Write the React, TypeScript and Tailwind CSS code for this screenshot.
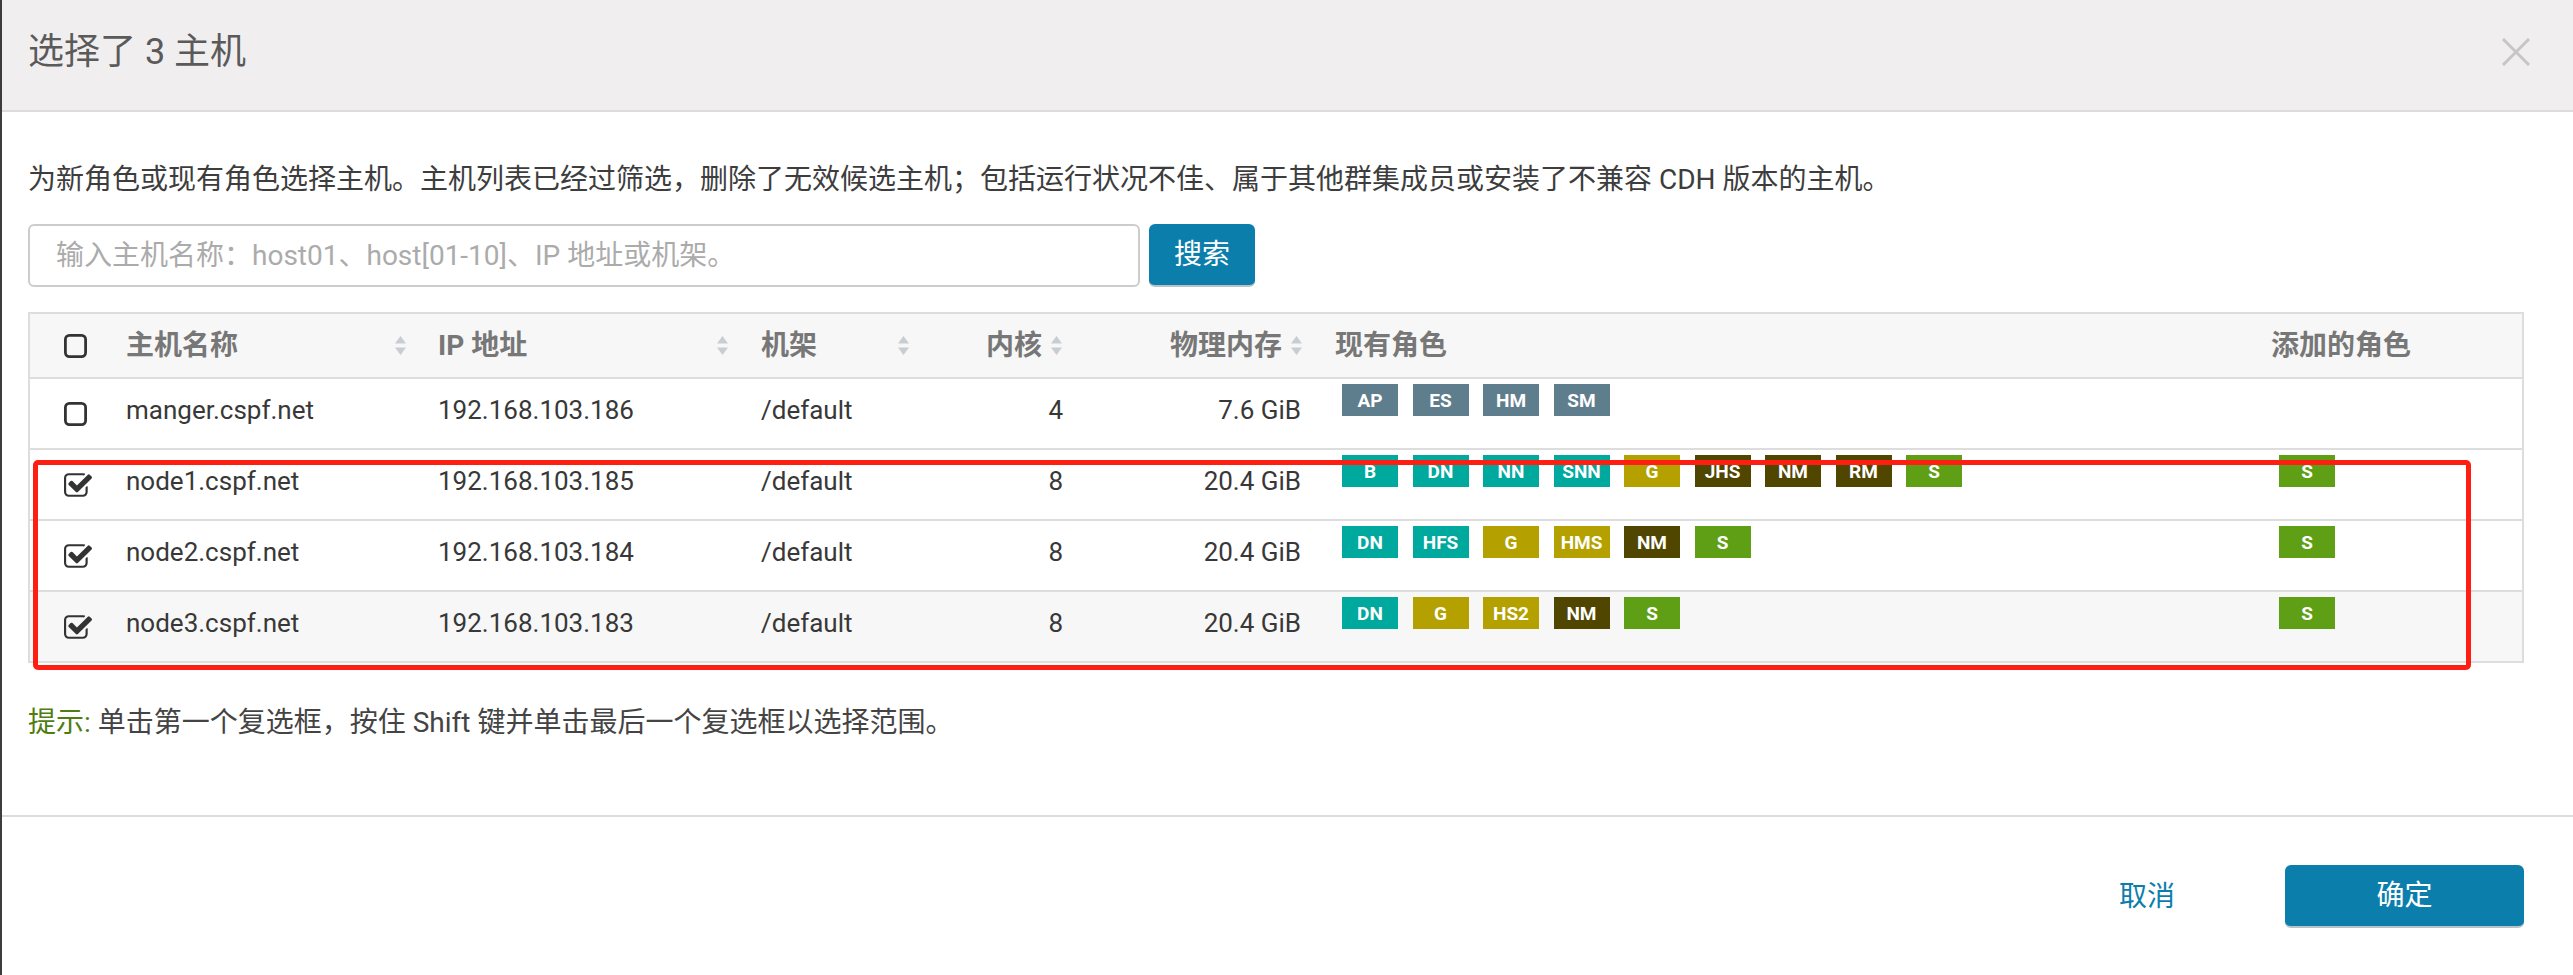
import React from "react";

type Role = { t: string; c: string };

const SLATE = "bg-[#5f7e8d]";
const TEAL = "bg-[#00a99d]";
const OLIVE = "bg-[#b4a100]";
const DARK = "bg-[#504600]";
const GREEN = "bg-[#5f9f15]";

const hosts: {
  name: string;
  ip: string;
  cores: string;
  mem: string;
  checked: boolean;
  roles: Role[];
  added: Role[];
  striped?: boolean;
}[] = [
  {
    name: "manger.cspf.net",
    ip: "192.168.103.186",
    cores: "4",
    mem: "7.6 GiB",
    checked: false,
    roles: [
      { t: "AP", c: SLATE },
      { t: "ES", c: SLATE },
      { t: "HM", c: SLATE },
      { t: "SM", c: SLATE },
    ],
    added: [],
  },
  {
    name: "node1.cspf.net",
    ip: "192.168.103.185",
    cores: "8",
    mem: "20.4 GiB",
    checked: true,
    roles: [
      { t: "B", c: TEAL },
      { t: "DN", c: TEAL },
      { t: "NN", c: TEAL },
      { t: "SNN", c: TEAL },
      { t: "G", c: OLIVE },
      { t: "JHS", c: DARK },
      { t: "NM", c: DARK },
      { t: "RM", c: DARK },
      { t: "S", c: GREEN },
    ],
    added: [{ t: "S", c: GREEN }],
  },
  {
    name: "node2.cspf.net",
    ip: "192.168.103.184",
    cores: "8",
    mem: "20.4 GiB",
    checked: true,
    roles: [
      { t: "DN", c: TEAL },
      { t: "HFS", c: TEAL },
      { t: "G", c: OLIVE },
      { t: "HMS", c: OLIVE },
      { t: "NM", c: DARK },
      { t: "S", c: GREEN },
    ],
    added: [{ t: "S", c: GREEN }],
  },
  {
    name: "node3.cspf.net",
    ip: "192.168.103.183",
    cores: "8",
    mem: "20.4 GiB",
    checked: true,
    striped: true,
    roles: [
      { t: "DN", c: TEAL },
      { t: "G", c: OLIVE },
      { t: "HS2", c: OLIVE },
      { t: "NM", c: DARK },
      { t: "S", c: GREEN },
    ],
    added: [{ t: "S", c: GREEN }],
  },
];

const GRID =
  "grid grid-cols-[80px_312px_323px_180px_154px_240px_936px_266px]";

function SortIcon() {
  return (
    <svg width="13" height="21" viewBox="0 0 13 21" className="shrink-0">
      <polygon points="6.5,1 12,8.5 1,8.5" fill="#c9cdd1" />
      <polygon points="1,12.5 12,12.5 6.5,20" fill="#c9cdd1" />
    </svg>
  );
}

function Unchecked() {
  return (
    <svg width="23" height="24" viewBox="0 0 23 24">
      <rect
        x="1.4"
        y="1.4"
        width="20.2"
        height="21.2"
        rx="4"
        fill="none"
        stroke="#333"
        strokeWidth="2.8"
      />
    </svg>
  );
}

function Checked() {
  return (
    <svg width="28" height="24" viewBox="64 128 1664 1408">
      <path
        fill="#333"
        d="M1472 930v318q0 119-84.5 203.5t-203.5 84.5h-832q-119 0-203.5-84.5t-84.5-203.5v-832q0-119 84.5-203.5t203.5-84.5h832q63 0 117 25 15 7 18 23 3 17-9 29l-49 49q-10 10-23 10-3 0-9-2-23-6-45-6h-832q-66 0-113 47t-47 113v832q0 66 47 113t113 47h832q66 0 113-47t47-113v-254q0-13 9-22l64-64q10-10 23-10 6 0 12 3 20 8 20 29zm231-489l-814 814q-24 24-57 24t-57-24l-430-430q-24-24-24-57t24-57l110-110q24-24 57-24t57 24l263 263 647-647q24-24 57-24t57 24l110 110q24 24 24 57t-24 57z"
      />
    </svg>
  );
}

function Badge({ r }: { r: Role }) {
  return (
    <span
      className={`inline-flex w-[56px] h-[32px] items-center justify-center text-white text-[19px] font-bold leading-none ${r.c}`}
    >
      {r.t}
    </span>
  );
}

export default function App() {
  return (
    <div className="w-[2573px] h-[975px] flex flex-col bg-white border-l-2 border-[#3c3c3c] font-[Roboto,'Noto_Sans_CJK_SC',sans-serif] overflow-hidden">
      {/* Header */}
      <div className="h-[112px] shrink-0 bg-[#f0eeef] border-b-2 border-[#dcdcdc] flex items-center justify-between pl-[26px] pr-[42px] pb-[6px]">
        <div className="text-[36px] text-[#5a5a5a] leading-none">
          选择了 3 主机
        </div>
        <svg width="30" height="30" viewBox="0 0 30 30">
          <line x1="2" y1="2" x2="28" y2="28" stroke="#c6c6c6" strokeWidth="3" />
          <line x1="28" y1="2" x2="2" y2="28" stroke="#c6c6c6" strokeWidth="3" />
        </svg>
      </div>

      {/* Body */}
      <div className="flex-1 flex flex-col pl-[26px] pr-[49px] pt-[48px]">
        <div className="text-[28px] leading-[40px] text-[#3d3d3d] whitespace-nowrap">
          为新角色或现有角色选择主机。主机列表已经过筛选，删除了无效候选主机；包括运行状况不佳、属于其他群集成员或安装了不兼容 CDH 版本的主机。
        </div>

        <div className="mt-[24px] flex items-center gap-[9px]">
          <div className="w-[1112px] h-[63px] rounded-[6px] border-2 border-[#cccccc] flex items-center pl-[26px] text-[28px] text-[#ababab] whitespace-nowrap">
            输入主机名称：host01、host[01-10]、IP 地址或机架。
          </div>
          <div className="w-[106px] h-[63px] rounded-[6px] bg-[#0c7eac] border-b-2 border-[#b9c2c7] flex items-center justify-center text-white text-[28px]">
            搜索
          </div>
        </div>

        {/* Table */}
        <div className="relative mt-[25px] border-2 border-[#dddddd]">
          <div className={`${GRID} h-[63px] bg-[#f7f7f7] items-center text-[28px] font-bold text-[#777777]`}>
            <div className="pl-[34px] flex items-center">
              <Unchecked />
            </div>
            <div className="pl-[16px] pr-[15px] flex items-center justify-between">
              <span>主机名称</span>
              <SortIcon />
            </div>
            <div className="pl-[16px] pr-[16px] flex items-center justify-between">
              <span>IP 地址</span>
              <SortIcon />
            </div>
            <div className="pl-[16px] pr-[15px] flex items-center justify-between">
              <span>机架</span>
              <SortIcon />
            </div>
            <div className="pr-[16px] flex items-center justify-end gap-[8px]">
              <span>内核</span>
              <SortIcon />
            </div>
            <div className="pr-[16px] flex items-center justify-end gap-[8px]">
              <span>物理内存</span>
              <SortIcon />
            </div>
            <div className="pl-[16px]">现有角色</div>
            <div className="pl-[16px]">添加的角色</div>
          </div>

          {hosts.map((h) => (
            <div
              key={h.name}
              className={`${GRID} h-[71px] border-t-2 border-[#dddddd] items-center text-[26px] text-[#383838] ${
                h.striped ? "bg-[#f7f7f7]" : "bg-white"
              }`}
            >
              <div className="pl-[34px] flex items-center">
                {h.checked ? <Checked /> : <Unchecked />}
              </div>
              <div className="pl-[16px] mb-[6px]">{h.name}</div>
              <div className="pl-[16px] mb-[6px]">{h.ip}</div>
              <div className="pl-[16px] mb-[6px]">/default</div>
              <div className="pr-[16px] text-right mb-[6px]">{h.cores}</div>
              <div className="pr-[18px] text-right mb-[6px]">{h.mem}</div>
              <div className="self-start pt-[5px] pl-[23px] flex flex-wrap gap-[14.5px]">
                {h.roles.map((r, i) => (
                  <Badge key={i} r={r} />
                ))}
              </div>
              <div className="self-start pt-[5px] pl-[24px] flex gap-[14.5px]">
                {h.added.map((r, i) => (
                  <Badge key={i} r={r} />
                ))}
              </div>
            </div>
          ))}

          {/* red annotation box */}
          <div className="absolute left-[3px] top-[146px] w-[2438px] h-[210px] border-[5px] border-[#ff1f12] rounded-[5px] pointer-events-none" />
        </div>

        <div className="mt-[40px] text-[28px] leading-[40px] whitespace-nowrap">
          <span className="text-[#4f7d10]">提示:</span>
          <span className="text-[#444444]"> 单击第一个复选框，按住 Shift 键并单击最后一个复选框以选择范围。</span>
        </div>
      </div>

      {/* Footer */}
      <div className="h-[160px] shrink-0 border-t-2 border-[#dcdcdc] flex items-start justify-end pt-[48px] pr-[49px]">
        <div className="h-[63px] flex items-center text-[28px] text-[#0c7eac] mr-[110px]">
          取消
        </div>
        <div className="w-[239px] h-[63px] rounded-[6px] bg-[#0c7eac] border-b-2 border-[#b9c2c7] flex items-center justify-center text-white text-[28px]">
          确定
        </div>
      </div>
    </div>
  );
}
